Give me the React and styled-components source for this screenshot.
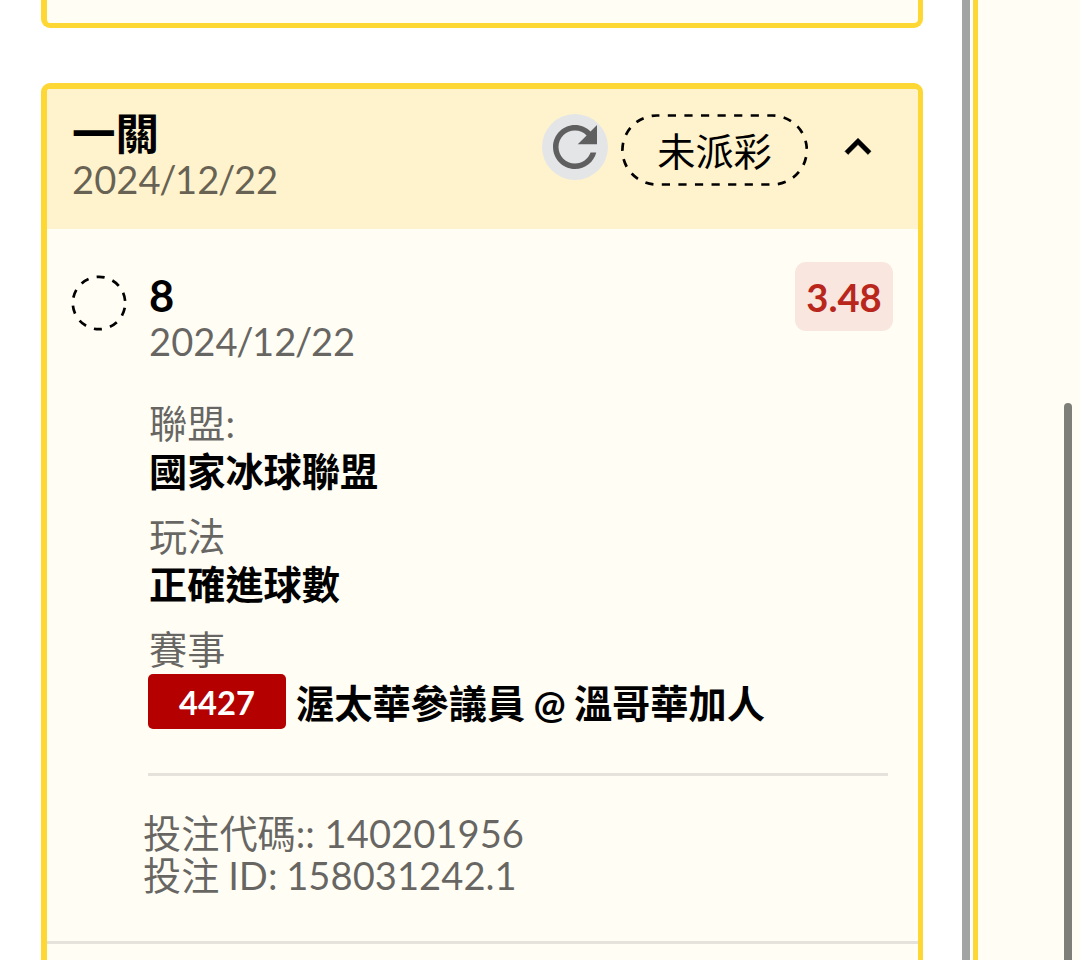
import React from 'react';
import styled, { createGlobalStyle } from 'styled-components';

const GlobalStyle = createGlobalStyle`
  * {
    box-sizing: border-box;
  }
  body {
    margin: 0;
    background-color: #fff;
    font-family: Lato, "Noto Sans CJK TC", sans-serif;
    font-size: 38.2px;
    color: #000;
    overflow: hidden;
  }
`

const Page = styled.div`
  display: flex;
  width: 1080px;
  height: 960px;
  overflow: hidden;
`

const BetList = styled.div`
  display: flex;
  flex-direction: column;
  gap: 55px;
  width: 962px;
  padding: 0 39px 0 41px;
  flex-shrink: 0;
`

const Card = styled.div`
  flex-shrink: 0;
  background-color: #fffdf4;
  border: 5px solid #fdd835;
  border-radius: 9px;
  overflow: hidden;
`

const PreviousCard = styled(Card)`
  height: 28px;
  border-top: none;
  border-left-width: 6px;
  border-radius: 0 0 9px 9px;
`

const BetCard = styled(Card)`
  height: 940px;
  border-width: 6px 5px 5px 6px;
`

const CardHeader = styled.div`
  display: flex;
  align-items: flex-start;
  height: 140px;
  padding: 21px 34px 0 25px;
  background-color: #fff3cd;
`

const Titles = styled.div`
  flex: 1;
`

const Title = styled.div`
  font-size: 43.5px;
  font-weight: bold;
  line-height: 46px;
`

const DateText = styled.div`
  line-height: 46px;
  color: rgba(0, 0, 0, 0.6);
`

const Slash = styled.span`
  margin: 0 -1.4px;
`

const Refresh = styled.button`
  width: 66px;
  height: 66px;
  padding: 0;
  margin-top: 4px;
  border: none;
  border-radius: 50%;
  background-color: #e4e5e7;
  color: #5f5f5f;
  svg {
    display: block;
  }
`

const Status = styled.div`
  position: relative;
  width: 187px;
  height: 72px;
  margin: 4px 24px 0 13px;
  line-height: 75px;
  text-align: center;
`

const StatusOutline = styled.svg`
  position: absolute;
  top: 0;
  left: 0;
`

const Toggle = styled.button`
  width: 52px;
  height: 52px;
  padding: 0;
  margin-top: 11px;
  border: none;
  background: none;
  color: #000;
  svg {
    display: block;
  }
`

const Selection = styled.div`
  display: flex;
  padding: 33px 25px 0 24px;
`

const Marker = styled.svg`
  flex-shrink: 0;
  margin: 12px 21px 0 -1px;
`

const Details = styled.div`
  flex: 1;
  padding-top: 10px;
`

const Pick = styled.div`
  font-size: 43.5px;
  font-weight: bold;
  line-height: 46px;
`

const Odds = styled.div`
  width: 98px;
  height: 69px;
  margin-left: -98px;
  border-radius: 11px;
  background-color: #f8e6df;
  color: #b9261c;
  font-weight: bold;
  line-height: 71px;
  text-align: center;
`

const Fields = styled.div`
  display: flex;
  flex-direction: column;
  gap: 22px;
  margin-top: 37px;
`

const Label = styled.div`
  line-height: 45px;
  color: rgba(0, 0, 0, 0.6);
`

const Value = styled.div`
  display: flex;
  align-items: center;
  height: ${props => props.$tall ? '57px' : '46px'};
  padding-top: ${props => props.$tall ? '2px' : '0'};
  font-weight: bold;
  word-spacing: -1px;
  white-space: pre;
`

const EventCode = styled.span`
  width: 138px;
  height: 55px;
  margin: 0 10px 0 -1px;
  border-radius: 5px;
  background-color: #b50000;
  color: #fff;
  font-size: 32.7px;
  line-height: 57px;
  text-align: center;
`

const Divider = styled.div`
  height: 3px;
  margin: 44px 30px 0 101px;
  background-color: #e5e2db;
`

const Reference = styled.div`
  height: 168px;
  padding: 36px 0 0 96px;
  line-height: 42px;
  color: rgba(0, 0, 0, 0.6);
  border-bottom: 3px solid #e5e2db;
`

const BetId = styled.div`
  word-spacing: -1px;
`

const Splitter = styled.div`
  width: 8px;
  margin-right: 3px;
  background-color: #a1a4a3;
`

const SidePanel = styled.div`
  flex: 1;
  display: flex;
  justify-content: flex-end;
  padding: 403px 8px 0 0;
  border-left: 5px solid #fdd835;
  background-color: #fffdf4;
`

const ScrollThumb = styled.div`
  width: 8px;
  height: 600px;
  border-radius: 4px;
  background-color: #7f7f7a;
`

const fields = [
  { label: '聯盟:', value: '國家冰球聯盟' },
  { label: '玩法', value: '正確進球數' },
  { label: '賽事', code: '4427', value: '渥太華參議員 @ 溫哥華加人' }
]

const RefreshIcon = () => (
  <svg width="66" height="66" viewBox="0 0 24 24" fill="currentColor">
    <path d="M17.65 6.35C16.2 4.9 14.21 4 12 4c-4.42 0-7.99 3.58-7.99 8s3.57 8 7.99 8c3.73 0 6.84-2.55 7.73-6h-2.08c-.82 2.33-3.04 4-5.65 4-3.31 0-6-2.69-6-6s2.69-6 6-6c1.66 0 3.14.69 4.22 1.78L13 11h7V4l-2.35 2.35z" />
  </svg>
)

const ArrowUpIcon = () => (
  <svg width="52" height="52" viewBox="0 0 24 24" fill="currentColor" stroke="currentColor" strokeWidth="0.3">
    <path d="M12 8l-6 6 1.41 1.41L12 10.83l4.59 4.58L18 14z" />
  </svg>
)

const Pending = ({ children }) => (
  <Status>
    <StatusOutline width="187" height="72" fill="none" stroke="#000" strokeWidth="2.7">
      <rect x="1.4" y="1.5" width="184.4" height="69" rx="34.5" strokeDasharray="8.2 8.38" strokeDashoffset="-10.9" />
    </StatusOutline>
    {children}
  </Status>
)

const BetDate = ({ year, month, day }) => (
  <DateText>{year}<Slash>/</Slash>{month}<Slash>/</Slash>{day}</DateText>
)

const App = () => (
  <>
    <GlobalStyle />
    <Page lang="zh-TW">
      <BetList>
        <PreviousCard />
        <BetCard>
          <CardHeader>
            <Titles>
              <Title>一關</Title>
              <BetDate year="2024" month="12" day="22" />
            </Titles>
            <Refresh><RefreshIcon /></Refresh>
            <Pending>未派彩</Pending>
            <Toggle><ArrowUpIcon /></Toggle>
          </CardHeader>
          <Selection>
            <Marker width="58" height="58" fill="none" stroke="#000" strokeWidth="2.7">
              <circle cx="29" cy="29" r="26.2" strokeDasharray="8.2 8.26" strokeDashoffset="-5" />
            </Marker>
            <Details>
              <Pick>8</Pick>
              <BetDate year="2024" month="12" day="22" />
              <Fields>
                {fields.map(field => (
                  <div key={field.label}>
                    <Label>{field.label}</Label>
                    <Value $tall={!!field.code}>
                      {field.code && <EventCode>{field.code}</EventCode>}
                      {field.value}
                    </Value>
                  </div>
                ))}
              </Fields>
            </Details>
            <Odds>3.48</Odds>
          </Selection>
          <Divider />
          <Reference>
            <div>投注代碼:: 140201956</div>
            <BetId>投注 ID: 158031242.1</BetId>
          </Reference>
        </BetCard>
      </BetList>
      <Splitter />
      <SidePanel>
        <ScrollThumb />
      </SidePanel>
    </Page>
  </>
)

export default App;
